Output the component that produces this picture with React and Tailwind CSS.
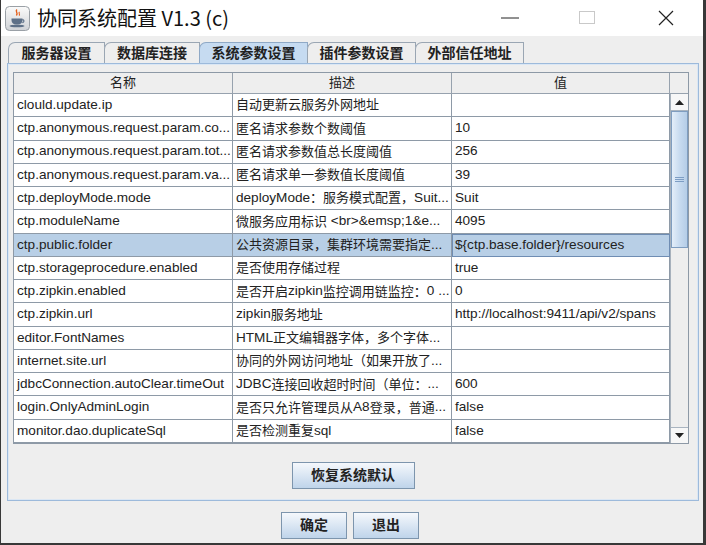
import React from 'react'

const ROWS = [
  ['clould.update.ip', '自动更新云服务外网地址', ''],
  ['ctp.anonymous.request.param.co...', '匿名请求参数个数阈值', '10'],
  ['ctp.anonymous.request.param.tot...', '匿名请求参数值总长度阈值', '256'],
  ['ctp.anonymous.request.param.va...', '匿名请求单一参数值长度阈值', '39'],
  ['ctp.deployMode.mode', 'deployMode：服务模式配置，Suit...', 'Suit'],
  ['ctp.moduleName', '微服务应用标识 <br>&emsp;1&e...', '4095'],
  ['ctp.public.folder', '公共资源目录，集群环境需要指定...', '${ctp.base.folder}/resources'],
  ['ctp.storageprocedure.enabled', '是否使用存储过程', 'true'],
  ['ctp.zipkin.enabled', '是否开启zipkin监控调用链监控：0 ...', '0'],
  ['ctp.zipkin.url', 'zipkin服务地址', 'http://localhost:9411/api/v2/spans'],
  ['editor.FontNames', 'HTML正文编辑器字体，多个字体...', ''],
  ['internet.site.url', '协同的外网访问地址（如果开放了...', ''],
  ['jdbcConnection.autoClear.timeOut', 'JDBC连接回收超时时间（单位：...', '600'],
  ['login.OnlyAdminLogin', '是否只允许管理员从A8登录，普通...', 'false'],
  ['monitor.dao.duplicateSql', '是否检测重复sql', 'false'],
]

const TABS = ['服务器设置', '数据库连接', '系统参数设置', '插件参数设置', '外部信任地址']
const TAB_W = ['w-[97px]', 'w-[96px]', 'w-[109px]', 'w-[109px]', 'w-[109px]']
const SELECTED = 6

const cjk = /([\u2e80-\u9fff\u3000-\u303f\uff00-\uffef]+)/

// CJK runs render a bit smaller than the latin text, like the java Dialog font
function Txt({ s }) {
  return s.split(cjk).map((p, i) =>
    cjk.test(p) ? <span key={i} className="text-[13px]">{p}</span> : <span key={i} className="whitespace-pre">{p}</span>
  )
}

function JavaIcon() {
  return (
    <svg width="25" height="25" viewBox="0 0 25 25">
      <defs>
        <linearGradient id="ic" x1="0" y1="0" x2="0" y2="1">
          <stop offset="0" stopColor="#fbfbfb" />
          <stop offset="1" stopColor="#cfd2d6" />
        </linearGradient>
      </defs>
      <rect x="0.5" y="0.5" width="24" height="24" rx="4" fill="url(#ic)" stroke="#9aa0a6" />
      <path d="M12 3.5c-2.5 2.2 1.8 3 -0.6 6" stroke="#e4601c" strokeWidth="1.4" fill="none" />
      <path d="M14.5 6c-1.5 1.4 1 2 -0.4 3.6" stroke="#e4601c" strokeWidth="1.1" fill="none" />
      <path d="M6.5 12.5h11v1.8c0 2.6-2 4.2-4.4 4.2h-2.2c-2.4 0-4.4-1.6-4.4-4.2z" fill="#5d7088" />
      <path d="M17.3 13.6c2.2 0 2.2 3 0 3" stroke="#5d7088" strokeWidth="1.2" fill="none" />
      <ellipse cx="12" cy="20" rx="7.5" ry="1.3" fill="#5d7088" />
    </svg>
  )
}

function Arrow({ up }) {
  return (
    <svg width="9" height="5" viewBox="0 0 9 5">
      <path d={up ? 'M0 5L4.5 0L9 5z' : 'M0 0L4.5 5L9 0z'} fill="#222" />
    </svg>
  )
}

function JButton({ children, w }) {
  return (
    <div className={`${w} h-[27px] flex items-center justify-center border border-[#7d95ad] bg-linear-to-b from-[#f5f8fc] to-[#bfd4ea] text-[14px] font-bold text-[#222]`}>
      {children}
    </div>
  )
}

export default function App() {
  return (
    <div className="w-[706px] h-[545px] bg-[#383838] font-['Liberation_Sans','Noto_Sans_CJK_SC',sans-serif] overflow-hidden">
      <div className="ml-[1px] w-[702px] h-[543px] bg-[#eeeeee] flex flex-col">
        {/* title bar */}
        <div className="h-[36px] bg-white flex items-center shrink-0">
          <div className="ml-[4px] mt-[1px]"><JavaIcon /></div>
          <div className="ml-[7px] text-[20px] text-[#111] font-['Noto_Sans_CJK_SC',sans-serif] leading-none">协同系统配置 V1.3 (c)</div>
          <div className="ml-auto flex items-center">
            <svg width="18" height="2" className="mr-[60px]"><path d="M0 1h18" stroke="#222" strokeWidth="1" /></svg>
            <svg width="17" height="14" className="mr-[62px]"><rect x="0.5" y="0.5" width="15" height="12" fill="none" stroke="#c9c9c9" /></svg>
            <svg width="16" height="16" className="mr-[29px]"><path d="M1 1L15 15M15 1L1 15" stroke="#222" strokeWidth="1.2" /></svg>
          </div>
        </div>

        {/* tabs */}
        <div className="pl-[7px] pt-[6px] flex items-end h-[27px] shrink-0">
          {TABS.map((t, i) => (
            <div
              key={t}
              className={`${TAB_W[i]} h-[21px] flex items-center justify-center border border-b-0 rounded-tl-[7px] text-[14px] font-bold text-[#222] ${
                i === 2 ? 'bg-[#c6dbf1] border-[#8fa9c6]' : 'bg-[#eeeeee] border-[#9aa6b3]'
              } ${i > 0 ? '-ml-[1px]' : ''}`}
            >
              {t}
            </div>
          ))}
        </div>

        {/* panel */}
        <div className="ml-[6px] w-[692px] h-[438px] border border-[#9dbadb] shadow-[inset_0_0_0_1px_#dbe7f4] flex flex-col items-center shrink-0">
          <div className="self-start ml-[5px] mt-[8px] w-[676px] h-[372px] border border-[#8d99a6] bg-white flex flex-col text-[13.6px] text-[#222]">
            {/* header */}
            <div className="h-[21px] grid grid-cols-[219px_219px_218px_18px] bg-[#eeeeee] shrink-0">
              {['名称', '描述', '值'].map(h => (
                <div key={h} className="flex items-center justify-center border-r border-b border-[#97a2ae]">
                  <Txt s={h} />
                </div>
              ))}
              <div className="border-b border-[#97a2ae]" />
            </div>
            {/* body */}
            <div className="flex-1 flex min-h-0">
              <div className="w-[656px] flex flex-col">
                {ROWS.map((r, ri) => (
                  <div key={ri} className={`flex-1 grid grid-cols-[219px_219px_218px] ${ri === SELECTED ? 'bg-[#b8cfe6]' : ''}`}>
                    {r.map((c, ci) => (
                      <div
                        key={ci}
                        className={`flex items-center px-[3px] whitespace-nowrap overflow-hidden border-r border-b border-[#8e9aa7] ${
                          ri === SELECTED && ci === 2 ? 'outline outline-[#6f8db3] -outline-offset-1' : ''
                        }`}
                      >
                        <Txt s={c} />
                      </div>
                    ))}
                  </div>
                ))}
              </div>
              {/* scrollbar */}
              <div className="w-[18px] bg-[#eeeeee] border-l border-[#a7b1bc] flex flex-col">
                <div className="h-[17px] bg-[#f7f7f7] border-b border-[#a9b4c0] flex items-center justify-center">
                  <Arrow up />
                </div>
                <div className="h-[137px] border border-[#7f9dc0] bg-linear-to-r from-[#e4eef9] via-[#c8dbf0] to-[#b5cde7] flex items-center justify-center">
                  <div className="flex flex-col gap-[1px]">
                    <div className="w-[9px] h-[1px] bg-[#7d9dc4]" />
                    <div className="w-[9px] h-[1px] bg-[#7d9dc4]" />
                    <div className="w-[9px] h-[1px] bg-[#7d9dc4]" />
                  </div>
                </div>
                <div className="flex-1" />
                <div className="h-[16px] bg-[#f7f7f7] border-t border-[#a9b4c0] flex items-center justify-center">
                  <Arrow />
                </div>
              </div>
            </div>
          </div>
          <div className="mt-[18px]">
            <JButton w="w-[123px]">恢复系统默认</JButton>
          </div>
        </div>

        {/* bottom buttons */}
        <div className="mt-[11px] flex justify-center gap-[6px] pr-[4px]">
          <JButton w="w-[66px]">确定</JButton>
          <JButton w="w-[66px]">退出</JButton>
        </div>
      </div>
    </div>
  )
}
